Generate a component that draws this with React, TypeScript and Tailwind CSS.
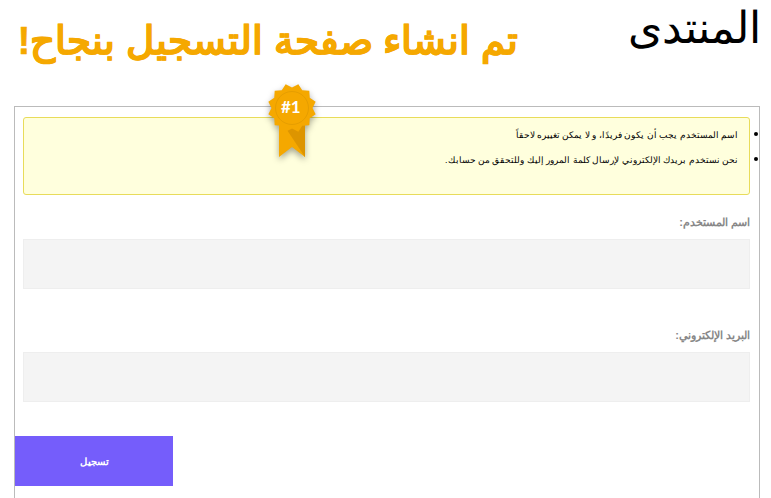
const badgePoints = Array.from({ length: 24 }, (_, i) => {
  const r = i % 2 === 0 ? 24.5 : 20.5;
  const a = ((15 + i * 15 - 90) * Math.PI) / 180;
  return `${(25 + r * Math.cos(a)).toFixed(2)},${(25 + r * Math.sin(a)).toFixed(2)}`;
}).join(" ");

export default function App() {
  return (
    <div dir="rtl" className="h-[498px] w-[771px] overflow-hidden bg-white font-['Liberation_Sans',sans-serif] text-black">
      <header className="flex h-[106px] items-start pr-[10px]">
        <div className="w-[135px] whitespace-nowrap text-[44px] leading-[56px]">المنتدى</div>
        <h1 className="mr-[108px] mt-[14px] whitespace-nowrap text-[38.5px] font-bold leading-[54px] text-[#f5a800] [-webkit-text-stroke:0.5px_#f5a800]">تم انشاء صفحة التسجيل بنجاح!</h1>
      </header>
      <main className="relative ml-[14px] mr-[11px] h-[392px] border border-b-0 border-[#bbbbbb]">
        <svg className="absolute left-[252px] top-[-24px] z-10 drop-shadow-[0_3px_3px_rgba(0,0,0,0.35)]" width="50" height="76" viewBox="0 0 50 76" aria-hidden="true">
          <path d="M12 40 H38 V74 L25 64 L12 74 Z" fill="#f5a800" />
          <path d="M20 47 L38 40 V74 Z" fill="#dd9500" />
          <polygon points={badgePoints} fill="#f5a800" />
          <circle cx="25" cy="25" r="16.5" fill="none" stroke="#e69e00" strokeWidth="1" />
        </svg>
        <span dir="ltr" className="absolute left-[266px] top-[-10px] z-10 font-['Lato',sans-serif] text-[17px] font-bold leading-[20px] text-white">#1</span>
        <div className="pl-2 pr-[9px] pt-[10px]">
          <div className="h-[78px] rounded-[3px] border border-[#e8dc5a] bg-[#ffffdd] pt-[5px] text-[14px] leading-[20px]">
            <ul className="list-disc pr-[6px]">
              <li className="mb-[3px] pr-[5px]"><span className="text-[8.8px]">اسم المستخدم يجب أن يكون فريدًا، و لا يمكن تغييره لاحقاً</span></li>
              <li className="pr-[5px]"><span className="text-[8.8px]">نحن نستخدم بريدك الإلكتروني لإرسال كلمة المرور إليك وللتحقق من حسابك.</span></li>
            </ul>
          </div>
          <label className="mt-[20px] block text-[11px] font-bold leading-[14px] text-[#888888]">اسم المستخدم:</label>
          <input className="mt-[10px] block h-[50px] w-full border border-[#eeeeee] bg-[#f4f4f4]" />
          <label className="mt-[39px] block text-[11px] font-bold leading-[14px] text-[#888888]">البريد الإلكتروني:</label>
          <input className="mt-[10px] block h-[50px] w-full border border-[#eeeeee] bg-[#f4f4f4]" />
        </div>
        <div className="mt-[34px] flex justify-end">
          <button className="h-[50px] w-[158px] bg-[#755dfb] text-[10px] font-bold text-white">تسجيل</button>
        </div>
      </main>
    </div>
  );
}
